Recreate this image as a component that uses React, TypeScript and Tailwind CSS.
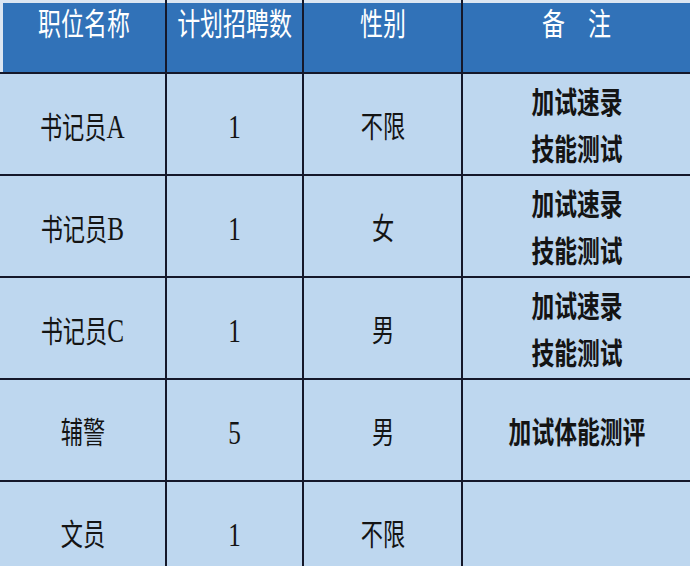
import React from 'react';

const rows = [
	{ name: '书记员A', count: '1', sex: '不限', note: ['加试速录', '技能测试'] },
	{ name: '书记员B', count: '1', sex: '女', note: ['加试速录', '技能测试'] },
	{ name: '书记员C', count: '1', sex: '男', note: ['加试速录', '技能测试'] },
	{ name: '辅警', count: '5', sex: '男', note: ['加试体能测评'] },
	{ name: '文员', count: '1', sex: '不限', note: [] },
];

const headers = ['职位名称', '计划招聘数', '性别', '备\u3000注'];

const cellFont = { fontFamily: '"Liberation Serif", "Noto Sans CJK SC", serif' };
const headFont = { fontFamily: '"Noto Sans CJK SC", sans-serif' };

// latin letters / digits come out a bit taller in the source
function Mixed({ text }: { text: string }) {
	const parts = text.split(/([A-Za-z0-9]+)/).filter(Boolean);
	return (
		<>
			{parts.map((p, i) =>
				/[A-Za-z0-9]/.test(p) ? (
					<span key={i} className="text-[34px]">
						{p}
					</span>
				) : (
					<span key={i}>{p}</span>
				)
			)}
		</>
	);
}

function Cell({ text }: { text: string }) {
	return (
		<div className="bg-[#bed7ef] h-[100px] flex items-center justify-center text-[#141414]">
			<span className="inline-block scale-x-[0.74] text-[30px] leading-none pt-[6px] whitespace-nowrap" style={cellFont}>
				<Mixed text={text} />
			</span>
		</div>
	);
}

export default function App() {
	return (
		<div className="w-[690px] h-[566px] overflow-hidden bg-[#dde8f4]">
			<div className="grid grid-cols-[165px_135px_157px_1fr] gap-[2px] bg-[#15182a]">
				{headers.map((h, i) => (
					<div
						key={h}
						className={
							'bg-[#3172b8] h-[72px] flex justify-center text-white border-t-[3px] border-[#dce6f2] ' +
							(i === 0 ? 'border-l-[3px]' : '')
						}
					>
						<span className="inline-block scale-x-[0.74] text-[31px] leading-[38px] whitespace-nowrap" style={headFont}>
							{h}
						</span>
					</div>
				))}
				{rows.map((r) => (
					<React.Fragment key={r.name}>
						<Cell text={r.name} />
						<Cell text={r.count} />
						<Cell text={r.sex} />
						<div className="bg-[#bed7ef] h-[100px] flex flex-col items-center justify-center text-[#141414]">
							{r.note.map((n) => (
								<span
									key={n}
									className="inline-block scale-x-[0.76] text-[30px] font-bold leading-[47px] whitespace-nowrap"
									style={headFont}
								>
									{n}
								</span>
							))}
						</div>
					</React.Fragment>
				))}
			</div>
		</div>
	);
}
